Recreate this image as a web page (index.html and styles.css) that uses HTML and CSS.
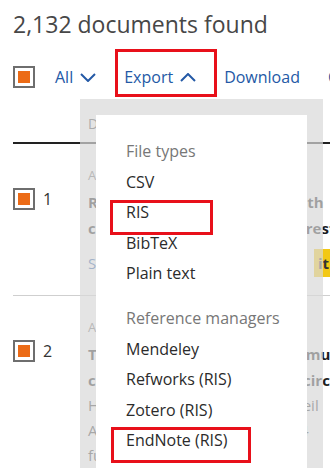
FILE: index.html
```html
<!DOCTYPE html>
<html>
	<head>
		<meta charset="utf-8">
		<title>Documents</title>
		<link rel="stylesheet" href="styles.css">
	</head>
	<body>
		<div class="page">
			<h1 class="count">2,132 documents found</h1>

			<div class="toolbar">
				<span class="check"></span>
				<a class="tool first">All
					<svg class="chev" width="16" height="9" viewBox="0 0 16 9"><path d="M1 1L8 8L15 1"/></svg>
				</a>
				<a class="tool marked">Export
					<svg class="chev" width="16" height="9" viewBox="0 0 16 9"><path d="M1 8L8 1L15 8"/></svg>
				</a>
				<a class="tool">Download</a>
				<a class="tool">Cite</a>

				<div class="dropdown">
					<ul class="menu">
						<li class="menu-head">File types</li>
						<li class="menu-item">CSV</li>
						<li class="menu-item marked-ris">RIS</li>
						<li class="menu-item">BibTeX</li>
						<li class="menu-item">Plain text</li>
						<li class="menu-head group">Reference managers</li>
						<li class="menu-item">Mendeley</li>
						<li class="menu-item">Refworks (RIS)</li>
						<li class="menu-item">Zotero (RIS)</li>
						<li class="menu-item marked-endnote">EndNote (RIS)</li>
					</ul>
				</div>
			</div>

			<div class="subrow">Date (newest)</div>

			<ul class="results">
				<li class="result">
					<div class="pick">
						<span class="check"></span>
						<span class="num">1</span>
					</div>
					<div class="body">
						<div class="type">Article &bull; Open access</div>
						<div class="title">Reinforcement learning with th</div>
						<div class="title">curriculum for the nearest forest</div>
						<div class="links">
							<span class="more">Show abstract &nbsp; Related doc</span>
							<span class="find">it @ library</span>
						</div>
					</div>
				</li>
				<li class="result">
					<div class="pick">
						<span class="check"></span>
						<span class="num">2</span>
					</div>
					<div class="body">
						<div class="type">Article</div>
						<div class="title">Towards robust and scalable multi</div>
						<div class="title">cross-domain assessment of circ</div>
						<div class="authors">Huang, Y., Chen, L., Wang, surveil</div>
						<div class="authors">Applied Energy, 2023, 340, for 4</div>
						<div class="authors">full text available</div>
					</div>
				</li>
			</ul>
		</div>
	</body>
</html>
```

FILE: styles.css
```css
*{
	margin: 0;
	padding: 0;
	box-sizing: border-box;
}
ul{
	list-style: none;
}
body{
	width: 330px;
	height: 468px;
	overflow: hidden;
	background: #fff;
	font-family: "Open Sans", "Noto Sans", sans-serif;
	color: #2e2e2e;
}
.page{
	padding-left: 13px;
}
.count{
	margin-top: 9px;
	font-size: 23px;
	line-height: 30px;
	font-weight: normal;
	color: #474747;
	white-space: nowrap;
}

/* toolbar */
.toolbar{
	position: relative;
	margin-top: 18px;
	height: 40px;
	display: flex;
	align-items: center;
	white-space: nowrap;
}
.check{
	display: block;
	flex: none;
	width: 22px;
	height: 22px;
	border: 2px solid #6e6e6e;
	padding: 3px;
	background: #fff;
}
.check::after{
	content: "";
	display: block;
	width: 100%;
	height: 100%;
	background: #ec6b16;
}
.tool{
	position: relative;
	display: flex;
	align-items: center;
	gap: 7px;
	font-size: 16px;
	color: #2459a6;
	margin-left: 28px;
}
.tool.first{
	margin-left: 20px;
}
.chev{
	fill: none;
	stroke: #2459a6;
	stroke-width: 2;
}
.tool.marked::after{
	content: "";
	position: absolute;
	left: -9px;
	top: -17px;
	width: 96px;
	height: 42px;
	border: 3px solid #e8101a;
}

/* export dropdown */
.dropdown{
	position: absolute;
	left: 67px;
	top: 42px;
	width: 243px;
	height: 420px;
	padding: 16px 16px 0;
	background: rgba(216, 216, 216, 0.7);
	z-index: 2;
}
.menu{
	background: #fff;
	height: 100%;
	padding: 21px 0 0 30px;
	font-size: 16px;
}
.menu-head,
.menu-item{
	position: relative;
	line-height: 30.5px;
}
.menu-head{
	color: #777;
}
.menu-head.group{
	margin-top: 14.5px;
}
.menu-item{
	color: #2b2b2b;
}
.marked-ris::after,
.marked-endnote::after{
	content: "";
	position: absolute;
	border: 3px solid #e8101a;
}
.marked-ris::after{
	left: -16px;
	top: 3px;
	width: 97px;
	height: 29px;
}
.marked-endnote::after{
	left: -15px;
	top: 2px;
	width: 134px;
	height: 30px;
}

.subrow{
	height: 47px;
	padding: 8px 0 0 75px;
	display: flex;
	align-items: center;
	font-size: 14px;
	color: #444;
	border-bottom: 2px solid #222;
	white-space: nowrap;
}

/* results */
.result{
	display: flex;
	padding: 17px 0 18px;
	border-bottom: 1px solid #cfcfcf;
	white-space: nowrap;
	overflow: hidden;
}
.pick{
	flex: none;
	width: 75px;
	display: flex;
	align-items: center;
	gap: 8px;
	height: 22px;
	margin-top: 27px;
}
.num{
	font-size: 16px;
	color: #333;
}
.body{
	flex: none;
	font-size: 15px;
}
.type{
	line-height: 28px;
	font-size: 13px;
	color: #6b6b6b;
}
.title{
	line-height: 26px;
	font-weight: bold;
	color: #1d1d1d;
}
.authors{
	line-height: 25px;
	color: #333;
}
.links{
	margin-top: 8px;
	line-height: 28px;
	display: flex;
}
.more{
	width: 226px;
	color: #2459a6;
}
.find{
	background: #f3c814;
	font-weight: bold;
	color: #333;
	padding: 0 4px;
}
```
